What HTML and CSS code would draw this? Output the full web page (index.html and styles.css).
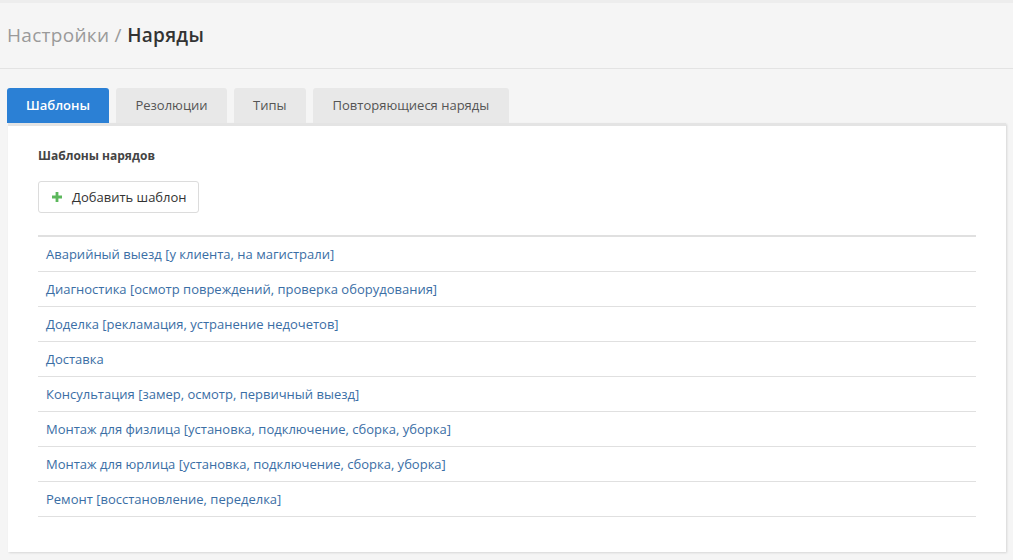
FILE: index.html
```html
<!DOCTYPE html>
<html lang="ru">
<head>
<meta charset="utf-8">
<title>Настройки / Наряды</title>
<link rel="stylesheet" href="styles.css">
</head>
<body>
<header class="page-header">
  <h1 class="title"><span class="crumb">Настройки</span> <span class="sep">/</span> <span class="current">Наряды</span></h1>
</header>
<nav class="tabs">
  <a class="tab active">Шаблоны</a>
  <a class="tab">Резолюции</a>
  <a class="tab">Типы</a>
  <a class="tab">Повторяющиеся наряды</a>
</nav>
<main class="panel">
  <h2 class="section-title">Шаблоны нарядов</h2>
  <button class="btn"><span class="plus"><svg width="10" height="10" viewBox="0 0 10 10"><path d="M3.6 0h2.8v3.6H10v2.8H6.4V10H3.6V6.4H0V3.6h3.6z" fill="#5cb85c"/></svg></span>Добавить шаблон</button>
  <ul class="list">
    <li><a>Аварийный выезд [у клиента, на магистрали]</a></li>
    <li><a>Диагностика [осмотр повреждений, проверка оборудования]</a></li>
    <li><a>Доделка [рекламация, устранение недочетов]</a></li>
    <li><a>Доставка</a></li>
    <li><a>Консультация [замер, осмотр, первичный выезд]</a></li>
    <li><a>Монтаж для физлица [установка, подключение, сборка, уборка]</a></li>
    <li><a>Монтаж для юрлица [установка, подключение, сборка, уборка]</a></li>
    <li><a>Ремонт [восстановление, переделка]</a></li>
  </ul>
</main>
</body>
</html>
```
FILE: styles.css
```css
* { box-sizing: border-box; }
html, body { margin: 0; padding: 0; }
body {
  background: #f5f5f5;
  font-family: "Open Sans", "Liberation Sans", sans-serif;
  color: #333;
  height: 560px;
  overflow: hidden;
  border-top: 3px solid #ededed;
}
.page-header {
  height: 66px;
  border-bottom: 1px solid #e3e3e3;
  padding-left: 7px;
  display: flex;
  align-items: center;
}
.title {
  margin: 0;
  font-size: 19px;
  font-weight: 400;
  letter-spacing: 0.3px;
  padding-bottom: 2px;
}
.crumb, .sep { color: #9a9a9a; }
.current { color: #333; font-weight: 600; }
.tabs {
  display: flex;
  gap: 7px;
  margin-top: 19px;
  padding-left: 7px;
}
.tab {
  display: block;
  height: 35px;
  line-height: 35px;
  padding: 0 19px;
  font-size: 13px;
  color: #555;
  background: #e8e8e8;
  border-radius: 3px 3px 0 0;
}
.tab:nth-child(2) { padding: 0 19.5px; }
.tab:nth-child(3) { padding: 0 19px; }
.tab:nth-child(4) { padding: 0 20px; }
.tab.active {
  background: #2b80d5;
  color: #fff;
  font-weight: 600;
  padding: 0 19px;
}
.panel {
  margin: 0 7px 0 8px;
  background: #fff;
  border-top: 3px solid #e4e4e4;
  box-shadow: 1px 1px 2px rgba(0,0,0,0.12);
  padding: 22px 30px 35px 30px;
  height: 429px;
}
.section-title {
  margin: 0;
  font-size: 12px;
  font-weight: 700;
  color: #444;
  line-height: 16px;
}
.btn {
  margin-top: 17px;
  height: 32px;
  width: 161px;
  display: flex;
  align-items: center;
  padding: 0 0 0 13px;
  background: #fff;
  border: 1px solid #dcdcdc;
  border-radius: 3px;
  font-family: inherit;
  font-size: 13px;
  color: #333;
}
.plus { display: inline-flex; margin-right: 10px; }
.list {
  list-style: none;
  margin: 22px 0 0;
  padding: 0;
  border-top: 2px solid #e0e0e0;
}
.list li {
  height: 35px;
  border-bottom: 1px solid #e0e0e0;
  display: flex;
  align-items: center;
  padding-left: 8px;
}
.list a {
  font-size: 13px;
  color: #3a6ea5;
}
```
